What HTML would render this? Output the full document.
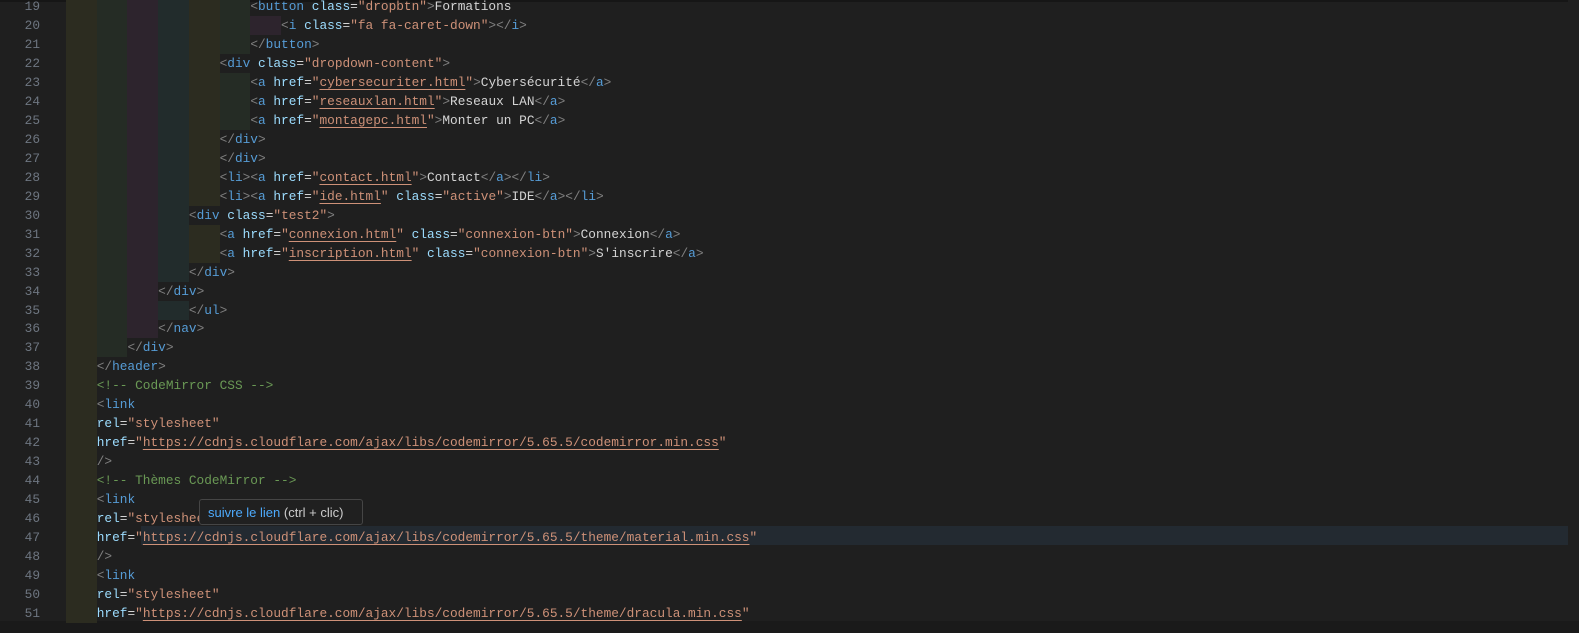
<!DOCTYPE html>
<html><head><meta charset="utf-8"><style>
html,body{margin:0;padding:0;width:1579px;height:633px;overflow:hidden;background:#1f1f1f;}
.l{position:absolute;left:0;height:19px;width:1579px;font-family:"Liberation Mono",monospace;font-size:12.8px;line-height:19px;white-space:pre;color:#d4d4d4;}
.n{position:absolute;left:0;width:40px;text-align:right;color:#6e7681;}
.c{position:absolute;left:97px;}
.g{position:absolute;top:0;height:19px;width:30.72px;}
.b{color:#808080}.t{color:#569cd6}.a{color:#9cdcfe}.s{color:#ce9178}.m{color:#6a9955}
.u{text-decoration:underline;text-decoration-color:#ce9178;text-underline-offset:3px}
#tip{position:absolute;left:199px;top:499px;width:164px;height:26px;background:#202020;border:1px solid #454545;border-radius:3px;font-family:"Liberation Sans",sans-serif;font-size:13px;line-height:26px;color:#cccccc;padding-left:8px;box-sizing:border-box;}
#tip span{color:#4daafc}
</style></head><body>
<div style="position:absolute;left:0;top:621px;width:1579px;height:12px;background:#1a1a1a"></div>
<div style="position:absolute;left:0;top:0;width:1568px;height:2px;background:#161616"></div>
<div style="position:absolute;left:141px;top:526px;width:1427px;height:19px;background:#232a31"></div>
<div id="lines"></div>
<div id="tip"><span>suivre le lien</span> (ctrl + clic)</div>
<script>
var L=[
[6,'<span class="b">&lt;</span><span class="t">button</span> <span class="a">class</span>=<span class="s">"dropbtn"</span><span class="b">&gt;</span>Formations'],
[7,'<span class="b">&lt;</span><span class="t">i</span> <span class="a">class</span>=<span class="s">"fa fa-caret-down"</span><span class="b">&gt;&lt;/</span><span class="t">i</span><span class="b">&gt;</span>'],
[6,'<span class="b">&lt;/</span><span class="t">button</span><span class="b">&gt;</span>'],
[5,'<span class="b">&lt;</span><span class="t">div</span> <span class="a">class</span>=<span class="s">"dropdown-content"</span><span class="b">&gt;</span>'],
[6,'<span class="b">&lt;</span><span class="t">a</span> <span class="a">href</span>=<span class="s">"<span class="u">cybersecuriter.html</span>"</span><span class="b">&gt;</span>Cybersécurité<span class="b">&lt;/</span><span class="t">a</span><span class="b">&gt;</span>'],
[6,'<span class="b">&lt;</span><span class="t">a</span> <span class="a">href</span>=<span class="s">"<span class="u">reseauxlan.html</span>"</span><span class="b">&gt;</span>Reseaux LAN<span class="b">&lt;/</span><span class="t">a</span><span class="b">&gt;</span>'],
[6,'<span class="b">&lt;</span><span class="t">a</span> <span class="a">href</span>=<span class="s">"<span class="u">montagepc.html</span>"</span><span class="b">&gt;</span>Monter un PC<span class="b">&lt;/</span><span class="t">a</span><span class="b">&gt;</span>'],
[5,'<span class="b">&lt;/</span><span class="t">div</span><span class="b">&gt;</span>'],
[5,'<span class="b">&lt;/</span><span class="t">div</span><span class="b">&gt;</span>'],
[5,'<span class="b">&lt;</span><span class="t">li</span><span class="b">&gt;&lt;</span><span class="t">a</span> <span class="a">href</span>=<span class="s">"<span class="u">contact.html</span>"</span><span class="b">&gt;</span>Contact<span class="b">&lt;/</span><span class="t">a</span><span class="b">&gt;&lt;/</span><span class="t">li</span><span class="b">&gt;</span>'],
[5,'<span class="b">&lt;</span><span class="t">li</span><span class="b">&gt;&lt;</span><span class="t">a</span> <span class="a">href</span>=<span class="s">"<span class="u">ide.html</span>"</span> <span class="a">class</span>=<span class="s">"active"</span><span class="b">&gt;</span>IDE<span class="b">&lt;/</span><span class="t">a</span><span class="b">&gt;&lt;/</span><span class="t">li</span><span class="b">&gt;</span>'],
[4,'<span class="b">&lt;</span><span class="t">div</span> <span class="a">class</span>=<span class="s">"test2"</span><span class="b">&gt;</span>'],
[5,'<span class="b">&lt;</span><span class="t">a</span> <span class="a">href</span>=<span class="s">"<span class="u">connexion.html</span>"</span> <span class="a">class</span>=<span class="s">"connexion-btn"</span><span class="b">&gt;</span>Connexion<span class="b">&lt;/</span><span class="t">a</span><span class="b">&gt;</span>'],
[5,'<span class="b">&lt;</span><span class="t">a</span> <span class="a">href</span>=<span class="s">"<span class="u">inscription.html</span>"</span> <span class="a">class</span>=<span class="s">"connexion-btn"</span><span class="b">&gt;</span>S\'inscrire<span class="b">&lt;/</span><span class="t">a</span><span class="b">&gt;</span>'],
[4,'<span class="b">&lt;/</span><span class="t">div</span><span class="b">&gt;</span>'],
[3,'<span class="b">&lt;/</span><span class="t">div</span><span class="b">&gt;</span>'],
[4,'<span class="b">&lt;/</span><span class="t">ul</span><span class="b">&gt;</span>'],
[3,'<span class="b">&lt;/</span><span class="t">nav</span><span class="b">&gt;</span>'],
[2,'<span class="b">&lt;/</span><span class="t">div</span><span class="b">&gt;</span>'],
[1,'<span class="b">&lt;/</span><span class="t">header</span><span class="b">&gt;</span>'],
[1,'<span class="m">&lt;!-- CodeMirror CSS --&gt;</span>'],
[1,'<span class="b">&lt;</span><span class="t">link</span>'],
[1,'<span class="a">rel</span>=<span class="s">"stylesheet"</span>'],
[1,'<span class="a">href</span>=<span class="s">"<span class="u">https://cdnjs.cloudflare.com/ajax/libs/codemirror/5.65.5/codemirror.min.css</span>"</span>'],
[1,'<span class="b">/&gt;</span>'],
[1,'<span class="m">&lt;!-- Thèmes CodeMirror --&gt;</span>'],
[1,'<span class="b">&lt;</span><span class="t">link</span>'],
[1,'<span class="a">rel</span>=<span class="s">"stylesheet"</span>'],
[1,'<span class="a">href</span>=<span class="s">"<span class="u">https://cdnjs.cloudflare.com/ajax/libs/codemirror/5.65.5/theme/material.min.css</span>"</span>'],
[1,'<span class="b">/&gt;</span>'],
[1,'<span class="b">&lt;</span><span class="t">link</span>'],
[1,'<span class="a">rel</span>=<span class="s">"stylesheet"</span>'],
[1,'<span class="a">href</span>=<span class="s">"<span class="u">https://cdnjs.cloudflare.com/ajax/libs/codemirror/5.65.5/theme/dracula.min.css</span>"</span>']
];
var cols=['#2c2c20','#252c25','#2d242d','#222c2c'];
var h='';
for(var i=0;i<L.length;i++){
 var yy=-3+i*18.97, lv=L[i][0];
 h+='<div class="l" style="top:'+yy+'px">';
 for(var k=0;k<lv;k++){h+='<div class="g" style="left:'+(66+k*30.72)+'px;background:'+cols[k%4]+'"></div>';}
 h+='<span class="n">'+(19+i)+'</span><span class="c" style="left:'+(66+lv*30.72)+'px">'+L[i][1]+'</span></div>';
}
document.getElementById('lines').innerHTML=h;
</script>
</body></html>
